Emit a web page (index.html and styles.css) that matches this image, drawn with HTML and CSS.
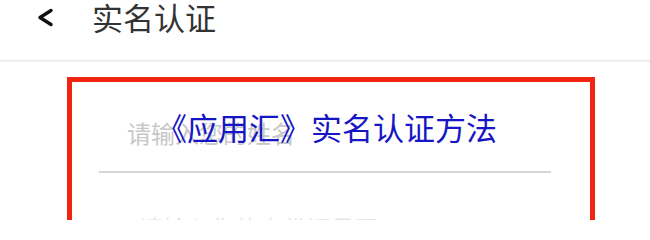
FILE: index.html
```html
<!DOCTYPE html>
<html lang="zh-CN">
<head>
<meta charset="utf-8">
<title>实名认证</title>
<link rel="stylesheet" href="styles.css">
</head>
<body>
<header class="bar">
  <svg class="back" width="20" height="22" viewBox="0 0 20 22" aria-hidden="true">
    <polyline points="16,3.5 5,10.5 16,17.5" fill="none" stroke="#111" stroke-width="3.4" stroke-linecap="round" stroke-linejoin="round"/>
  </svg>
  <h1 class="title">实名认证</h1>
</header>
<main class="content">
  <section class="frame">
    <div class="field field-first"><span class="placeholder">请输入您的姓名</span></div>
    <div class="field field-second"><span class="placeholder faint">请输入您的身份证号码</span></div>
    <div class="caption">《应用汇》实名认证方法</div>
  </section>
</main>
</body>
</html>
```
FILE: styles.css
```css
html, body {
  margin: 0;
  padding: 0;
  background: #ffffff;
  font-family: "Noto Sans CJK SC", "Noto Sans", sans-serif;
}

body {
  height: 220px;
  overflow: hidden;
}

.bar {
  display: flex;
  align-items: flex-start;
  height: 60px;
  padding-left: 35px;
  gap: 37px;
  border-bottom: 1px solid #e9e9e9;
  box-shadow: 0 1px 1px #f3f3f3;
}

.back {
  margin-top: 7px;
  flex: none;
}

.title {
  margin: 0;
  padding-top: 1px;
  font-size: 31px;
  line-height: 31px;
  font-weight: normal;
  color: #333333;
}

.content {
  padding: 16px 0 0 67px;
}

.frame {
  position: relative;
  width: 518px;
  height: 138px;
  border: 5px solid #f0240f;
  border-bottom: 0;
  overflow: hidden;
}

.field {
  margin-left: 27px;
  width: 452px;
  padding-left: 28px;
  box-sizing: border-box;
}

.field-first {
  padding-top: 39px;
  padding-bottom: 26px;
  border-bottom: 2px solid #d6d6d6;
}

.field-second {
  padding-top: 43px;
  padding-left: 40px;
}

.placeholder {
  display: block;
  font-size: 24px;
  line-height: 24px;
  color: #c8c8c8;
}

.placeholder.faint {
  color: #e6e6e6;
}

.caption {
  position: absolute;
  left: 84px;
  top: 29px;
  font-size: 31px;
  line-height: 31px;
  color: #1616c4;
  white-space: nowrap;
}
```
